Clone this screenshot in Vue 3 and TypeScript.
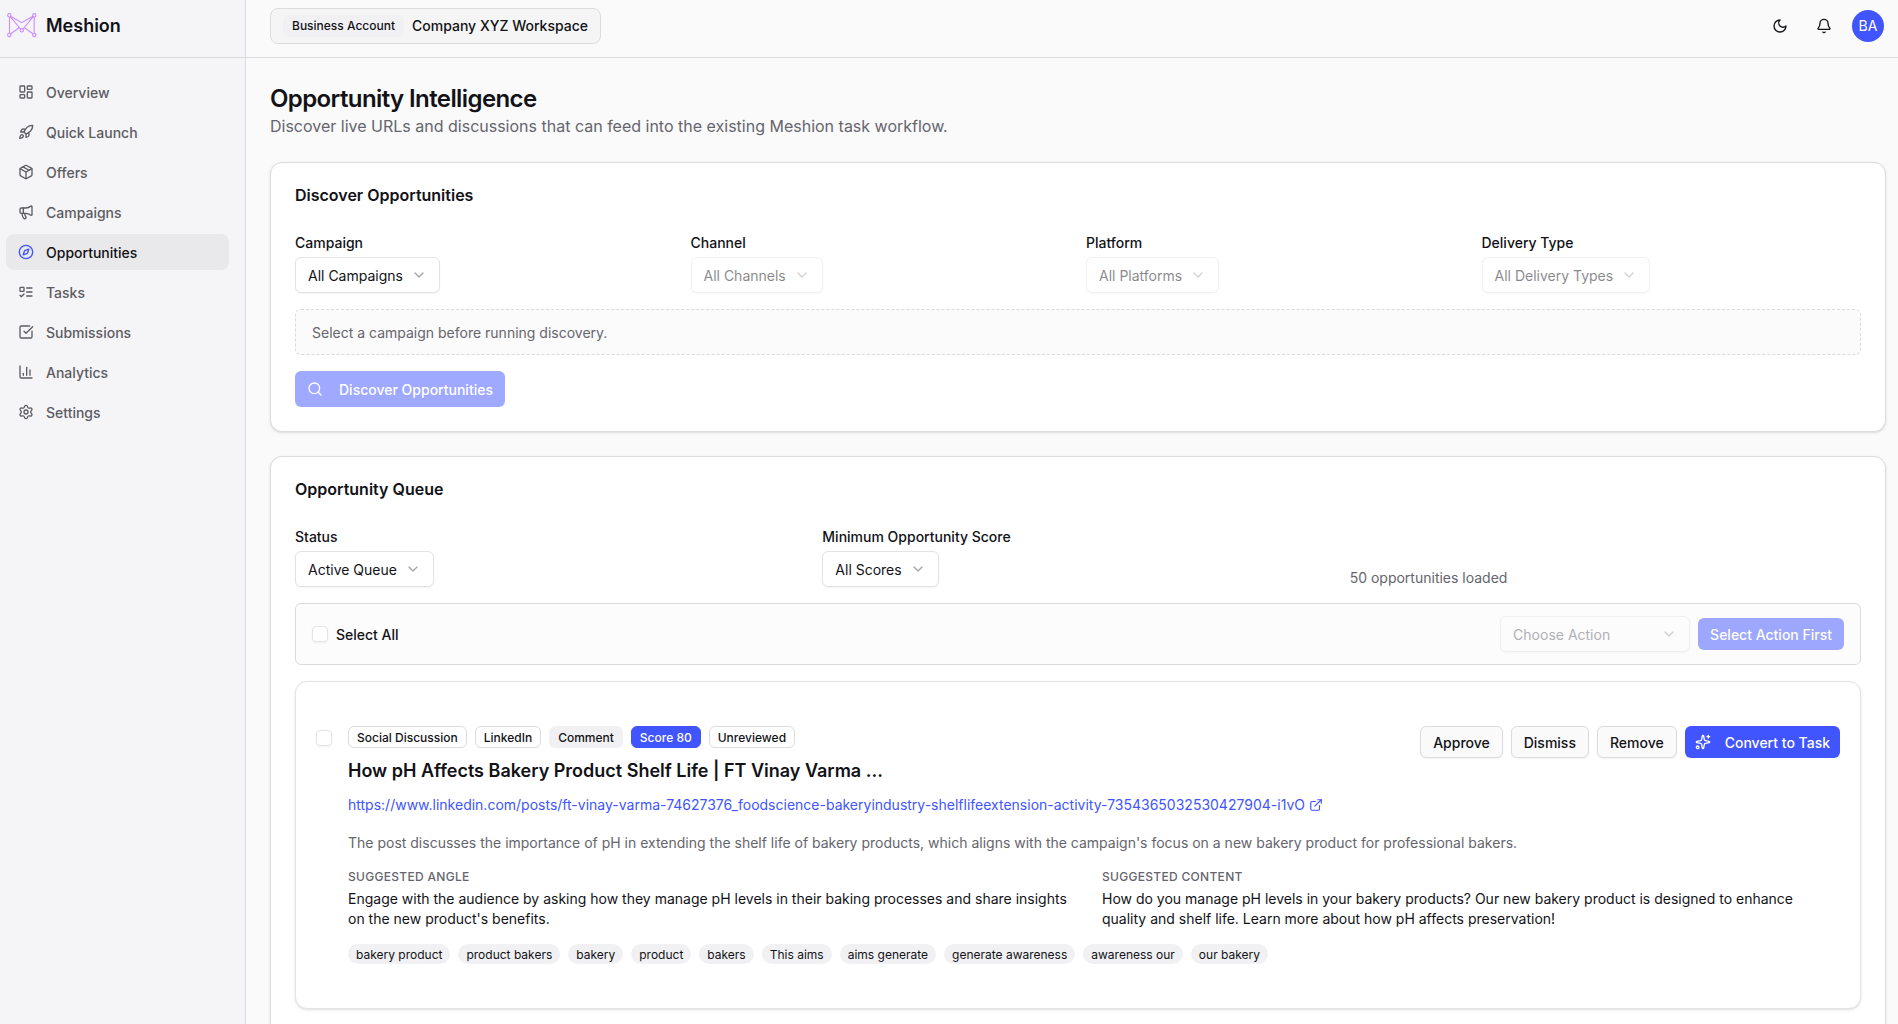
<script setup lang="ts">
interface NavItem {
  label: string
  icon: string
  active?: boolean
}
interface Field {
  label: string
  value: string
  disabled?: boolean
}
interface Badge {
  text: string
  kind: 'outline' | 'soft' | 'solid'
}

const icons: Record<string, string> = {
  dashboard:
    '<rect width="7" height="9" x="3" y="3" rx="1"/><rect width="7" height="5" x="14" y="3" rx="1"/><rect width="7" height="9" x="14" y="12" rx="1"/><rect width="7" height="5" x="3" y="16" rx="1"/>',
  rocket:
    '<path d="M4.5 16.5c-1.5 1.26-2 5-2 5s3.74-.5 5-2c.71-.84.7-2.13-.09-2.91a2.18 2.18 0 0 0-2.91-.09z"/><path d="m12 15-3-3a22 22 0 0 1 2-3.95A12.88 12.88 0 0 1 22 2c0 2.72-.78 7.5-6 11a22.35 22.35 0 0 1-4 2z"/><path d="M9 12H4s.55-3.03 2-4c1.62-1.08 5 0 5 0"/><path d="M12 15v5s3.03-.55 4-2c1.08-1.62 0-5 0-5"/>',
  package:
    '<path d="M11 21.73a2 2 0 0 0 2 0l7-4A2 2 0 0 0 21 16V8a2 2 0 0 0-1-1.73l-7-4a2 2 0 0 0-2 0l-7 4A2 2 0 0 0 3 8v8a2 2 0 0 0 1 1.73z"/><path d="M12 22V12"/><path d="M3.29 7 12 12l8.71-5"/><path d="m7.5 4.27 9 5.15"/>',
  megaphone:
    '<path d="M11 6a13 13 0 0 0 8.4-2.8A1 1 0 0 1 21 4v12a1 1 0 0 1-1.6.8A13 13 0 0 0 11 14H5a2 2 0 0 1-2-2V8a2 2 0 0 1 2-2z"/><path d="M6 14a12 12 0 0 0 2.4 7.2 2 2 0 0 0 3.2-2.4A8 8 0 0 1 10 14"/><path d="M8 6v8"/>',
  compass:
    '<circle cx="12" cy="12" r="10"/><path d="m16.24 7.76-1.804 5.411a2 2 0 0 1-1.265 1.265L7.76 16.24l1.804-5.411a2 2 0 0 1 1.265-1.265z"/>',
  tasks:
    '<rect x="3" y="5" width="6" height="6" rx="1"/><path d="m3 17 2 2 4-4"/><path d="M13 6h8"/><path d="M13 12h8"/><path d="M13 18h8"/>',
  check: '<path d="M21 10.656V19a2 2 0 0 1-2 2H5a2 2 0 0 1-2-2V5a2 2 0 0 1 2-2h12.344"/><path d="m9 11 3 3L22 4"/>',
  chart: '<path d="M3 3v16a2 2 0 0 0 2 2h16"/><path d="M18 17V9"/><path d="M13 17V5"/><path d="M8 17v-3"/>',
  settings:
    '<path d="M9.671 4.136a2.34 2.34 0 0 1 4.659 0 2.34 2.34 0 0 0 3.319 1.915 2.34 2.34 0 0 1 2.33 4.033 2.34 2.34 0 0 0 0 3.831 2.34 2.34 0 0 1-2.33 4.033 2.34 2.34 0 0 0-3.319 1.915 2.34 2.34 0 0 1-4.659 0 2.34 2.34 0 0 0-3.32-1.915 2.34 2.34 0 0 1-2.33-4.033 2.34 2.34 0 0 0 0-3.831A2.34 2.34 0 0 1 6.35 6.051a2.34 2.34 0 0 0 3.319-1.915"/><circle cx="12" cy="12" r="3"/>',
  moon: '<path d="M12 3a6 6 0 0 0 9 9 9 9 0 1 1-9-9Z"/>',
  bell: '<path d="M10.268 21a2 2 0 0 0 3.464 0"/><path d="M3.262 15.326A1 1 0 0 0 4 17h16a1 1 0 0 0 .74-1.673C19.41 13.956 18 12.499 18 8A6 6 0 0 0 6 8c0 4.499-1.411 5.956-2.738 7.326"/>',
  chevron: '<path d="m6 9 6 6 6-6"/>',
  search: '<path d="m21 21-4.34-4.34"/><circle cx="11" cy="11" r="8"/>',
  sparkles:
    '<path d="M11.017 2.814a1 1 0 0 1 1.966 0l1.051 5.558a2 2 0 0 0 1.594 1.594l5.558 1.051a1 1 0 0 1 0 1.966l-5.558 1.051a2 2 0 0 0-1.594 1.594l-1.051 5.558a1 1 0 0 1-1.966 0l-1.051-5.558a2 2 0 0 0-1.594-1.594l-5.558-1.051a1 1 0 0 1 0-1.966l5.558-1.051a2 2 0 0 0 1.594-1.594z"/><path d="M20 2v4"/><path d="M22 4h-4"/><circle cx="4" cy="20" r="2"/>',
  external:
    '<path d="M15 3h6v6"/><path d="M10 14 21 3"/><path d="M18 13v6a2 2 0 0 1-2 2H5a2 2 0 0 1-2-2V8a2 2 0 0 1 2-2h6"/>',
}

const nav: NavItem[] = [
  { label: 'Overview', icon: 'dashboard' },
  { label: 'Quick Launch', icon: 'rocket' },
  { label: 'Offers', icon: 'package' },
  { label: 'Campaigns', icon: 'megaphone' },
  { label: 'Opportunities', icon: 'compass', active: true },
  { label: 'Tasks', icon: 'tasks' },
  { label: 'Submissions', icon: 'check' },
  { label: 'Analytics', icon: 'chart' },
  { label: 'Settings', icon: 'settings' },
]

const discoverFields: Field[] = [
  { label: 'Campaign', value: 'All Campaigns' },
  { label: 'Channel', value: 'All Channels', disabled: true },
  { label: 'Platform', value: 'All Platforms', disabled: true },
  { label: 'Delivery Type', value: 'All Delivery Types', disabled: true },
]
const queueFields: Field[] = [
  { label: 'Status', value: 'Active Queue' },
  { label: 'Minimum Opportunity Score', value: 'All Scores' },
]
const badges: Badge[] = [
  { text: 'Social Discussion', kind: 'outline' },
  { text: 'LinkedIn', kind: 'outline' },
  { text: 'Comment', kind: 'soft' },
  { text: 'Score 80', kind: 'solid' },
  { text: 'Unreviewed', kind: 'outline' },
]
const tags: string[] = [
  'bakery product', 'product bakers', 'bakery', 'product', 'bakers', 'This aims',
  'aims generate', 'generate awareness', 'awareness our', 'our bakery',
]
</script>

<template>
  <div class="app">
    <aside class="sidebar">
      <div class="brand">
        <svg class="logo" viewBox="0 0 31 27" fill="none">
          <g stroke="#cb8dff" stroke-width="1.1">
            <path d="M3.500 5v16.500M28.200 5v16.500M4.500 4.200l11.200 6.500 11.300-6.500M4.300 4.600l10.300 12.400M27.300 4.600 17 17M4.800 21.800l8.700-6.300M26.800 21.800l-8.700-6.300" />
            <circle cx="3.300" cy="3.300" r="1.700" /><circle cx="28.300" cy="3.300" r="1.700" />
            <circle cx="3.300" cy="23" r="1.700" /><circle cx="28.300" cy="23" r="1.700" />
            <circle cx="15.800" cy="18.300" r="1.700" />
          </g>
        </svg>
        <span>Meshion</span>
      </div>
      <nav class="nav">
        <a v-for="n in nav" :key="n.label" class="nav-item" :class="{ active: n.active }">
          <svg class="icon" viewBox="0 0 24 24" v-html="icons[n.icon]" />
          <span>{{ n.label }}</span>
        </a>
      </nav>
    </aside>

    <div class="page">
      <header class="topbar">
        <div class="workspace">
          <span class="account">Business Account</span>
          <span class="company">Company XYZ Workspace</span>
        </div>
        <div class="tools">
          <svg class="icon" viewBox="0 0 24 24" v-html="icons.moon" />
          <svg class="icon" viewBox="0 0 24 24" v-html="icons.bell" />
          <span class="avatar">BA</span>
        </div>
      </header>

      <main class="main">
        <div class="heading">
          <h1>Opportunity Intelligence</h1>
          <p>Discover live URLs and discussions that can feed into the existing Meshion task workflow.</p>
        </div>

        <section class="card">
          <h2>Discover Opportunities</h2>
          <div class="fields four">
            <div v-for="f in discoverFields" :key="f.label" class="field">
              <label>{{ f.label }}</label>
              <button class="select" :class="{ disabled: f.disabled }">
                <span>{{ f.value }}</span>
                <svg class="icon chevron" viewBox="0 0 24 24" v-html="icons.chevron" />
              </button>
            </div>
          </div>
          <div class="notice">Select a campaign before running discovery.</div>
          <button class="btn primary tall faded">
            <svg class="icon" viewBox="0 0 24 24" v-html="icons.search" />
            <span>Discover Opportunities</span>
          </button>
        </section>

        <section class="card">
          <h2>Opportunity Queue</h2>
          <div class="fields three">
            <div v-for="f in queueFields" :key="f.label" class="field">
              <label>{{ f.label }}</label>
              <button class="select">
                <span>{{ f.value }}</span>
                <svg class="icon chevron" viewBox="0 0 24 24" v-html="icons.chevron" />
              </button>
            </div>
            <p class="count">50 opportunities loaded</p>
          </div>

          <div class="bulk">
            <span class="checkbox" />
            <span class="select-all">Select All</span>
            <button class="select wide">
              <span>Choose Action</span>
              <svg class="icon chevron" viewBox="0 0 24 24" v-html="icons.chevron" />
            </button>
            <button class="btn primary faded"><span>Select Action First</span></button>
          </div>

          <article class="item">
            <span class="checkbox item-check" />
            <div class="item-body">
              <div class="item-top">
                <div class="badges">
                  <span v-for="b in badges" :key="b.text" class="badge" :class="b.kind">{{ b.text }}</span>
                </div>
                <div class="actions">
                  <button class="btn outline"><span>Approve</span></button>
                  <button class="btn outline"><span>Dismiss</span></button>
                  <button class="btn outline"><span>Remove</span></button>
                  <button class="btn primary convert">
                    <svg class="icon" viewBox="0 0 24 24" v-html="icons.sparkles" />
                    <span>Convert to Task</span>
                  </button>
                </div>
              </div>
              <h3>How pH Affects Bakery Product Shelf Life | FT Vinay Varma ...</h3>
              <a class="link">
                <span>https://www.linkedin.com/posts/ft-vinay-varma-74627376_foodscience-bakeryindustry-shelflifeextension-activity-7354365032530427904-i1vO</span>
                <svg class="icon" viewBox="0 0 24 24" v-html="icons.external" />
              </a>
              <p class="summary">The post discusses the importance of pH in extending the shelf life of bakery products, which aligns with the campaign's focus on a new bakery product for professional bakers.</p>
              <div class="suggestions">
                <div>
                  <h4>Suggested Angle</h4>
                  <p>Engage with the audience by asking how they manage pH levels in their baking processes and share insights on the new product's benefits.</p>
                </div>
                <div>
                  <h4>Suggested Content</h4>
                  <p>How do you manage pH levels in your bakery products? Our new bakery product is designed to enhance quality and shelf life. Learn more about how pH affects preservation!</p>
                </div>
              </div>
              <div class="tags">
                <span v-for="t in tags" :key="t" class="tag">{{ t }}</span>
              </div>
            </div>
          </article>
          <article class="item" />
        </section>
      </main>
    </div>
  </div>
</template>

<style>
html,
body {
  overflow: hidden;
}
</style>

<style scoped>
* {
  box-sizing: border-box;
  margin: 0;
}
.app {
  display: flex;
  height: 1024px;
  overflow: hidden;
  background: #fafafa;
  color: #121217;
  font: 400 14px/20px Inter, sans-serif;
}
button {
  font: inherit;
  color: inherit;
}
.icon {
  width: 16px;
  height: 16px;
  flex: none;
  fill: none;
  stroke: currentColor;
  stroke-width: 2;
  stroke-linecap: round;
  stroke-linejoin: round;
}
.sidebar {
  width: 246px;
  flex: none;
  background: #f5f5f8;
  border-right: 1px solid #dadadd;
}
.brand {
  display: flex;
  align-items: center;
  gap: 9px;
  height: 58px;
  padding: 0 0 6px 6px;
  border-bottom: 1px solid #dadadd;
  font-size: 18px;
  line-height: 28px;
  font-weight: 600;
}
.logo {
  width: 31px;
  height: 27px;
}
.nav {
  display: flex;
  flex-direction: column;
  gap: 4px;
  padding: 16px 16px 0 6px;
}
.nav-item {
  display: flex;
  align-items: center;
  gap: 12px;
  height: 36px;
  padding: 0 12px;
  border-radius: 8px;
  font-weight: 500;
  color: #5c5c62;
}
/* Optical centring: Inter sits slightly high in its line box. */
.nav-item span,
.btn span,
.select span,
.select-all {
  padding-top: 2px;
}
.nav-item.active {
  background: #e9e9eb;
  color: #121217;
}
.nav-item.active .icon {
  color: #4155ff;
}
.page {
  flex: 1;
  min-width: 0;
}
.topbar {
  display: flex;
  justify-content: space-between;
  align-items: center;
  height: 58px;
  padding: 0 14px 5px 24px;
  border-bottom: 1px solid #dadadd;
}
.workspace {
  display: flex;
  align-items: center;
  gap: 8px;
  height: 36px;
  padding: 0 12px;
  border: 1px solid #dcdcde;
  border-radius: 8px;
  background: #f5f5f5;
  font-weight: 500;
}
.account {
  padding: 3px 9px;
  border-radius: 6px;
  background: #f1f1f3;
  font-size: 12px;
  line-height: 16px;
}
.tools {
  display: flex;
  align-items: center;
  gap: 28px;
}
.avatar {
  width: 32px;
  height: 32px;
  margin-left: -8px;
  border-radius: 50%;
  background: #4155ff;
  color: #fff;
  line-height: 32px;
  text-align: center;
}
.main {
  display: flex;
  flex-direction: column;
  gap: 24px;
  padding: 24px 12px 0 24px;
}
h1 {
  height: 32px;
  font-size: 24px;
  line-height: 34px;
  font-weight: 600;
  letter-spacing: -0.6px;
}
.heading p {
  font-size: 16px;
  line-height: 24px;
  color: #65656d;
}
.card {
  display: flex;
  flex-direction: column;
  gap: 16px;
  padding: 24px;
  border: 1px solid #dcdcdf;
  border-radius: 12px;
  background: #fff;
  box-shadow: 0 1px 3px rgba(0, 0, 0, 0.1), 0 1px 2px -1px rgba(0, 0, 0, 0.1);
}
h2 {
  margin-bottom: 14px;
  font-size: 16px;
  line-height: 16px;
  font-weight: 600;
}
.fields {
  display: grid;
  gap: 16px;
}
.four {
  grid-template-columns: repeat(4, 1fr);
}
.three {
  grid-template-columns: repeat(3, 1fr);
}
.field {
  display: flex;
  flex-direction: column;
  align-items: flex-start;
  gap: 4px;
}
label,
.select-all {
  font-weight: 500;
}
.select {
  display: flex;
  align-items: center;
  gap: 8px;
  height: 36px;
  padding: 0 12px;
  border: 1px solid #e3e3e7;
  border-radius: 6px;
  background: #fff;
  box-shadow: 0 1px 2px rgba(0, 0, 0, 0.05);
}
.chevron {
  color: #a5a5a9;
}
.select.disabled {
  opacity: 0.5;
}
.notice {
  padding: 13px 16px 11px;
  border: 1px dashed #dadadd;
  border-radius: 6px;
  background: #fbfbfb;
  color: #65656d;
}
.btn {
  display: flex;
  align-items: center;
  height: 32px;
  padding: 0 12px;
  border: 0;
  border-radius: 6px;
  font-weight: 500;
}
.btn.primary {
  background: #4155ff;
  color: #fff;
}
.btn.faded {
  opacity: 0.5;
}
.btn.tall {
  align-self: flex-start;
  gap: 16px;
  height: 36px;
}
.btn.convert {
  gap: 14px;
  padding: 0 10px;
}
.btn.outline {
  border: 1px solid #dcdcdf;
  background: #fafafa;
  box-shadow: 0 1px 2px rgba(0, 0, 0, 0.05);
}
.count {
  align-self: end;
  height: 20px;
  line-height: 22px;
  color: #65656d;
}
.bulk {
  display: flex;
  align-items: center;
  gap: 8px;
  height: 62px;
  padding: 0 16px;
  border: 1px solid #dadadd;
  border-radius: 6px;
  background: #fcfcfc;
}
.checkbox {
  width: 16px;
  height: 16px;
  flex: none;
  border: 1px solid #e3e3e7;
  border-radius: 4px;
  background: #fff;
  box-shadow: 0 1px 2px rgba(0, 0, 0, 0.05);
}
.select.wide {
  justify-content: space-between;
  width: 190px;
  margin-left: auto;
  background: transparent;
  color: #65656d;
  opacity: 0.5;
}
.item {
  display: flex;
  gap: 16px;
  min-height: 328px;
  padding: 44px 20px;
  border: 1px solid #e4e4e6;
  border-radius: 12px;
  background: #fff;
  box-shadow: 0 1px 3px rgba(0, 0, 0, 0.1), 0 1px 2px -1px rgba(0, 0, 0, 0.1);
}
.item-check {
  margin-top: 4px;
}
.item-body {
  flex: 1;
  min-width: 0;
}
.item-top {
  display: flex;
  justify-content: space-between;
  height: 30px;
}
.badges,
.actions,
.tags {
  display: flex;
  gap: 8px;
}
.badge {
  height: 22px;
  padding: 3px 8px 1px;
  border: 1px solid #dcdcdf;
  border-radius: 6px;
  font-size: 12px;
  line-height: 16px;
  font-weight: 500;
}
.badge.soft {
  border-color: transparent;
  background: #f1f1f3;
}
.badge.solid {
  border-color: #4155ff;
  background: #4155ff;
  color: #fff;
}
h3 {
  height: 28px;
  font-size: 18px;
  line-height: 30px;
  font-weight: 600;
}
.link {
  display: flex;
  align-items: center;
  gap: 4px;
  margin-top: 11px;
  color: #4155ff;
}
.link .icon {
  width: 14px;
  height: 14px;
}
.summary {
  margin-top: 18px;
  color: #65656d;
}
.suggestions {
  display: grid;
  grid-template-columns: 1fr 1fr;
  gap: 16px;
  margin-top: 15px;
}
h4 {
  margin-bottom: 4px;
  padding-top: 1px;
  font-size: 12px;
  line-height: 16px;
  font-weight: 500;
  letter-spacing: 0.3px;
  text-transform: uppercase;
  color: #65656d;
}
.tags {
  margin-top: 15px;
}
.tag {
  padding: 3px 8px 1px;
  border-radius: 10px;
  background: #f1f1f3;
  font-size: 12px;
  line-height: 16px;
}
</style>
